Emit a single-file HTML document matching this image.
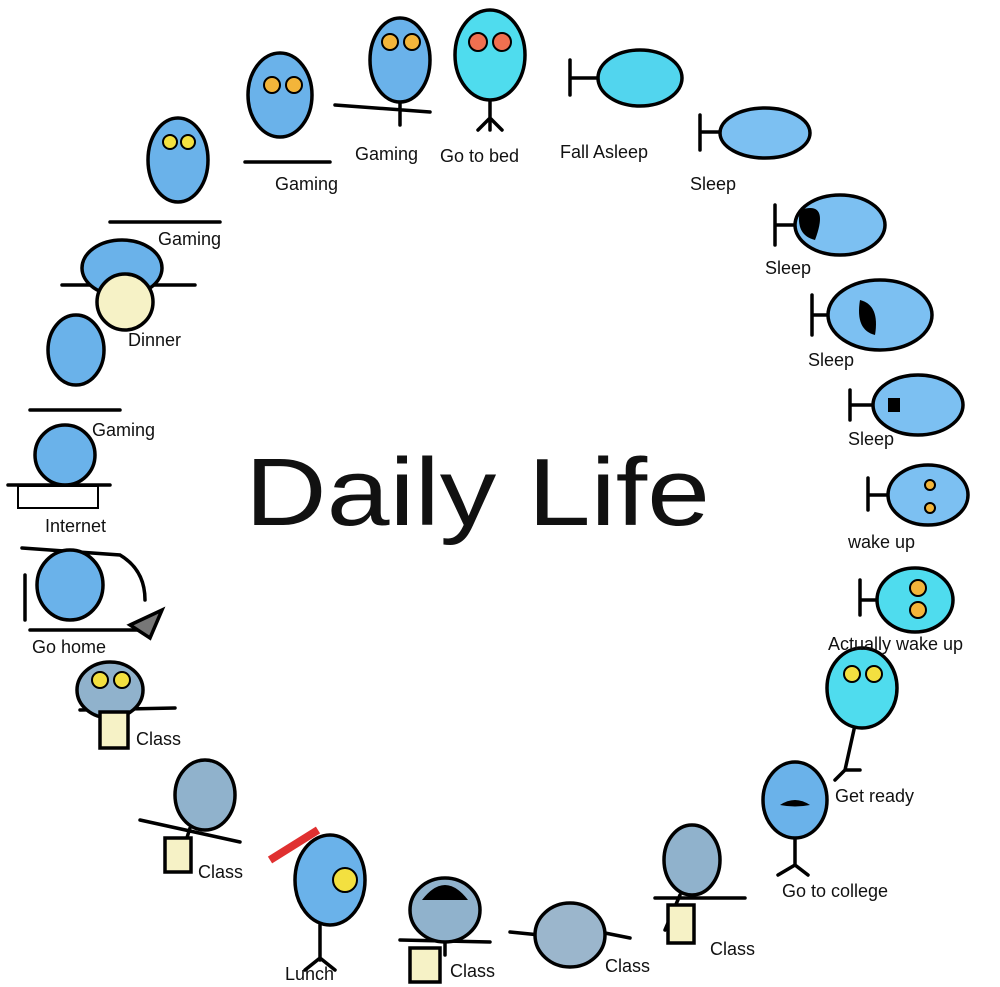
<!DOCTYPE html>
<html><head><meta charset="utf-8"><style>
html,body{margin:0;padding:0;background:#fff;width:1000px;height:987px;overflow:hidden}
svg text{font-family:"Liberation Sans",sans-serif;fill:#111}
.l{font-size:18px}
</style></head><body>
<svg width="1000" height="987" viewBox="0 0 1000 987" xmlns="http://www.w3.org/2000/svg">
<g stroke="#000" stroke-width="3.5" stroke-linecap="round" fill="none">
<!-- bodies / lines -->
<path d="M400 102 V125 M335 105 L430 112 M490 100 V130 M478 130 L490 118 L502 130"/>
<path d="M598 78 H570 M570 60 V95 M720 132 H700 M700 115 V150 M795 225 H775 M775 205 V245 M828 315 H812 M812 295 V335 M873 405 H850 M850 390 V420 M888 495 H868 M868 478 V510 M877 600 H860 M860 580 V615"/>
<path d="M855 725 L845 770 M835 780 L845 770 L860 770 M795 838 V865 M778 875 L795 865 L808 875"/>
<path d="M680 895 L665 930 M655 898 L745 898 M540 935 L510 932 M600 932 L630 938 M445 942 V955 M400 940 L490 942"/>
<path d="M320 925 V960 M305 970 L320 958 L335 970 M190 828 L180 860 M140 820 L240 842 M80 710 L175 708"/>
<path d="M22 548 L120 555 Q145 570 145 600 M25 575 V620 M30 630 H140 M8 485 H110 M30 410 H120 M110 222 H220 M62 285 H195 M245 162 H330"/>
</g>
<g stroke="#000" stroke-width="3.5">
<ellipse cx="400" cy="60" rx="30" ry="42" fill="#6ab2ea"/>
<ellipse cx="490" cy="55" rx="35" ry="45" fill="#4fdcee"/>
<ellipse cx="640" cy="78" rx="42" ry="28" fill="#52d5ee"/>
<ellipse cx="765" cy="133" rx="45" ry="25" fill="#7cc0f2"/>
<ellipse cx="840" cy="225" rx="45" ry="30" fill="#7cc0f2"/>
<ellipse cx="880" cy="315" rx="52" ry="35" fill="#7cc0f2"/>
<ellipse cx="918" cy="405" rx="45" ry="30" fill="#7cc0f2"/>
<ellipse cx="928" cy="495" rx="40" ry="30" fill="#7cc0f2"/>
<ellipse cx="915" cy="600" rx="38" ry="32" fill="#4fdcee"/>
<ellipse cx="862" cy="688" rx="35" ry="40" fill="#4fdcee"/>
<ellipse cx="795" cy="800" rx="32" ry="38" fill="#6ab2ea"/>
<ellipse cx="692" cy="860" rx="28" ry="35" fill="#90b2cc"/>
<ellipse cx="570" cy="935" rx="35" ry="32" fill="#9bb6cc"/>
<ellipse cx="445" cy="910" rx="35" ry="32" fill="#90b2cc"/>
<ellipse cx="330" cy="880" rx="35" ry="45" fill="#6ab2ea"/>
<ellipse cx="205" cy="795" rx="30" ry="35" fill="#90b2cc"/>
<ellipse cx="110" cy="690" rx="33" ry="28" fill="#90b2cc"/>
<ellipse cx="70" cy="585" rx="33" ry="35" fill="#6ab2ea"/>
<ellipse cx="65" cy="455" rx="30" ry="30" fill="#6ab2ea"/>
<ellipse cx="76" cy="350" rx="28" ry="35" fill="#6ab2ea"/>
<ellipse cx="122" cy="268" rx="40" ry="28" fill="#6ab2ea"/>
<circle cx="125" cy="302" r="28" fill="#f6f2c6"/>
<ellipse cx="178" cy="160" rx="30" ry="42" fill="#6ab2ea"/>
<ellipse cx="280" cy="95" rx="32" ry="42" fill="#6ab2ea"/>
<rect x="100" y="712" width="28" height="36" fill="#f6f2c6"/>
<rect x="165" y="838" width="26" height="34" fill="#f6f2c6"/>
<rect x="668" y="905" width="26" height="38" fill="#f6f2c6"/>
<rect x="410" y="948" width="30" height="34" fill="#f6f2c6"/>
<path d="M270 860 L318 830" stroke="#e03030" stroke-width="8"/>
<path d="M130 625 L162 610 L150 638 Z" fill="#777"/>
<rect x="18" y="486" width="80" height="22" fill="#fff" stroke-width="2"/>
</g>
<!-- eyes -->
<g fill="#f3b53a" stroke="#000" stroke-width="2">
<circle cx="390" cy="42" r="8"/><circle cx="412" cy="42" r="8"/>
<circle cx="478" cy="42" r="9" fill="#f07050"/><circle cx="502" cy="42" r="9" fill="#f07050"/>
<circle cx="272" cy="85" r="8"/><circle cx="294" cy="85" r="8"/>
<circle cx="170" cy="142" r="7" fill="#f3e040"/><circle cx="188" cy="142" r="7" fill="#f3e040"/>
<circle cx="852" cy="674" r="8" fill="#f3e040"/><circle cx="874" cy="674" r="8" fill="#f3e040"/>
<circle cx="918" cy="588" r="8"/><circle cx="918" cy="610" r="8"/>
<circle cx="930" cy="485" r="5"/><circle cx="930" cy="508" r="5"/>
<circle cx="345" cy="880" r="12" fill="#f3e040"/>
<circle cx="100" cy="680" r="8" fill="#f3e040"/><circle cx="122" cy="680" r="8" fill="#f3e040"/>
</g>
<g fill="#000">
<path d="M780 805 Q795 795 810 805 Q795 808 780 805Z"/>
<path d="M422 900 Q445 870 468 900 Z"/>
<path d="M800 210 Q830 200 815 240 Q795 235 800 210Z"/>
<path d="M860 300 Q880 305 875 335 Q855 330 860 300Z"/>
<rect x="888" y="398" width="12" height="14"/>
</g>
<text x="245" y="525" font-size="96" textLength="465" lengthAdjust="spacingAndGlyphs" style="font-weight:normal">Daily Life</text>
<g class="l">
<text x="355" y="160" class="l">Gaming</text>
<text x="440" y="162" class="l">Go to bed</text>
<text x="560" y="158" class="l">Fall Asleep</text>
<text x="690" y="190" class="l">Sleep</text>
<text x="765" y="274" class="l">Sleep</text>
<text x="808" y="366" class="l">Sleep</text>
<text x="848" y="445" class="l">Sleep</text>
<text x="848" y="548" class="l">wake up</text>
<text x="828" y="650" class="l">Actually wake up</text>
<text x="835" y="802" class="l">Get ready</text>
<text x="782" y="897" class="l">Go to college</text>
<text x="710" y="955" class="l">Class</text>
<text x="605" y="972" class="l">Class</text>
<text x="450" y="977" class="l">Class</text>
<text x="285" y="980" class="l">Lunch</text>
<text x="198" y="878" class="l">Class</text>
<text x="136" y="745" class="l">Class</text>
<text x="32" y="653" class="l">Go home</text>
<text x="45" y="532" class="l">Internet</text>
<text x="92" y="436" class="l">Gaming</text>
<text x="128" y="346" class="l">Dinner</text>
<text x="158" y="245" class="l">Gaming</text>
<text x="275" y="190" class="l">Gaming</text>
</g>
</svg>
</body></html>
